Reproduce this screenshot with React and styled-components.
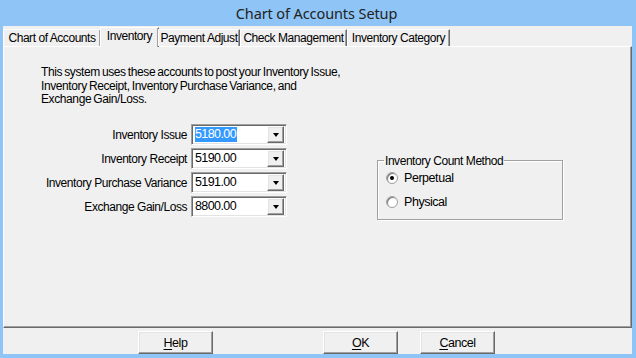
import React from "react";
import styled, { createGlobalStyle, css } from "styled-components";

const Global = createGlobalStyle`
  html, body { margin: 0; padding: 0; background: #8ec5f6; }
  body { width: 636px; height: 358px; overflow: hidden; }
  #root { width: 636px; height: 358px; }
`;

const sunken = css`
  border-top: 1px solid #a0a0a0;
  border-left: 1px solid #a0a0a0;
  border-right: 1px solid #ffffff;
  border-bottom: 1px solid #ffffff;
  box-shadow: inset 1px 1px 0 #696969, inset -1px -1px 0 #e3e3e3;
`;

const raised = css`
  border-top: 1px solid #ffffff;
  border-left: 1px solid #ffffff;
  border-right: 1px solid #696969;
  border-bottom: 1px solid #696969;
  box-shadow: inset -1px -1px 0 #a0a0a0, inset 1px 1px 0 #e3e3e3;
`;

const Window = styled.div`
  width: 636px;
  height: 358px;
  box-sizing: border-box;
  background: #8ec5f6;
  padding: 0 4px 4px 3px;
  display: flex;
  flex-direction: column;
  font-family: "Liberation Sans", Arial, sans-serif;
  font-size: 12px;
  letter-spacing: -0.45px;
  color: #000;
`;

const TitleBar = styled.div`
  height: 26px;
  flex: none;
  display: flex;
  align-items: center;
  justify-content: center;
  font-family: "Noto Sans", "Open Sans", sans-serif;
  font-size: 14.5px;
  letter-spacing: -0.1px;
  color: #222;
  padding-right: 2px;
`;

const Client = styled.div`
  flex: 1;
  background: #f0f0f0;
  display: flex;
  flex-direction: column;
  min-height: 0;
`;

const TabStrip = styled.div`
  height: 20px;
  flex: none;
  display: flex;
  align-items: flex-end;
  position: relative;
  z-index: 1;
`;

const Tab = styled.div`
  box-sizing: border-box;
  width: ${(p) => p.$w}px;
  height: ${(p) => (p.$active ? 20 : 17)}px;
  display: flex;
  align-items: center;
  justify-content: center;
  padding-bottom: ${(p) => (p.$active ? 3 : 0)}px;
  background: #f0f0f0;
  border-top: 1px solid #ffffff;
  border-left: 1px solid #ffffff;
  border-right: 1px solid #696969;
  box-shadow: inset -1px 0 0 #a0a0a0;
  white-space: nowrap;
  margin-left: ${(p) => (p.$active ? -1 : 0)}px;
  margin-right: ${(p) => (p.$active ? -1 : 0)}px;
  margin-bottom: ${(p) => (p.$active ? -1 : 0)}px;
`;

const Panel = styled.div`
  flex: 1;
  min-height: 0;
  border-top: 1px solid #ffffff;
  border-left: 1px solid #ffffff;
  border-right: 1px solid #696969;
  border-bottom: 1px solid #696969;
  box-shadow: inset -1px -1px 0 #a0a0a0;
  padding: 19px 0 0 37px;
  display: flex;
  flex-direction: column;
`;

const Intro = styled.p`
  margin: 0;
  line-height: 13.5px;
  letter-spacing: -0.4px;
  word-spacing: -0.8px;
  white-space: nowrap;
`;

const FormArea = styled.div`
  display: flex;
  align-items: flex-start;
  margin-top: 17px;
`;

const Fields = styled.div`
  display: grid;
  grid-template-columns: 146px 96px;
  column-gap: 4px;
  row-gap: 3px;
  align-items: center;
`;

const Label = styled.label`
  text-align: right;
  white-space: nowrap;
  padding-top: 1px;
`;

const Combo = styled.div`
  box-sizing: border-box;
  height: 21px;
  ${sunken};
  background: #ffffff;
  display: flex;
  align-items: center;
  padding: 1px 2px 1px 2px;
`;

const Value = styled.span`
  flex: 1;
  display: flex;
  align-items: center;
  height: 100%;
  font-size: 12.5px;
  letter-spacing: -0.6px;
  padding-left: 1px;
`;

const Highlight = styled.span`
  background: ${(p) => (p.$sel ? "#3399ff" : "transparent")};
  color: ${(p) => (p.$sel ? "#ffffff" : "#000")};
  line-height: 15px;
  padding-right: 1px;
`;

const DropButton = styled.span`
  box-sizing: border-box;
  width: 17px;
  height: 17px;
  background: #f0f0f0;
  ${raised};
  display: flex;
  align-items: center;
  justify-content: center;
`;

const Arrow = styled.span`
  width: 0;
  height: 0;
  border-left: 3.5px solid transparent;
  border-right: 3.5px solid transparent;
  border-top: 4px solid #000;
  margin-top: 1px;
`;

const Group = styled.fieldset`
  margin: 30px 0 0 90px;
  padding: 2px 0 0 8px;
  width: 186px;
  height: 66px;
  box-sizing: border-box;
  border: 1px solid #a0a0a0;
  box-shadow: 1px 1px 0 #ffffff, inset 1px 1px 0 #ffffff;
`;

const Legend = styled.legend`
  padding: 0 1px;
  margin-left: -2px;
`;

const RadioRow = styled.div`
  display: flex;
  align-items: center;
  gap: 6px;
  height: 16px;
  margin-bottom: ${(p) => p.$mb || 0}px;
`;

const RadioCircle = styled.span`
  box-sizing: border-box;
  width: 12px;
  height: 12px;
  border-radius: 50%;
  border: 1px solid #a0a0a0;
  background: radial-gradient(circle at 60% 60%, #ffffff 40%, #e8e8e8 100%);
  box-shadow: inset 1px 1px 0 #7a7a7a;
  display: flex;
  align-items: center;
  justify-content: center;
  &::after {
    content: "";
    width: 4px;
    height: 4px;
    border-radius: 50%;
    background: ${(p) => (p.$checked ? "#000" : "transparent")};
  }
`;

const RadioText = styled.span`
  font-size: 12.5px;
`;

const ButtonBar = styled.div`
  height: 26px;
  flex: none;
  display: flex;
  align-items: flex-end;
  padding-left: 135px;
`;

const Button = styled.div`
  box-sizing: border-box;
  width: 75px;
  height: 23px;
  background: #f0f0f0;
  ${raised};
  display: flex;
  align-items: center;
  justify-content: center;
  font-size: 12.5px;
  margin-left: ${(p) => p.$ml || 0}px;
`;

const U = styled.span`
  text-decoration: underline;
  text-underline-offset: 2px;
`;

const tabs = [
  { t: "Chart of Accounts", w: 98 },
  { t: "Inventory", w: 59, active: true },
  { t: "Payment Adjust", w: 82 },
  { t: "Check Management", w: 107 },
  { t: "Inventory Category", w: 103 },
];

const fields = [
  { label: "Inventory Issue", value: "5180.00", sel: true },
  { label: "Inventory Receipt", value: "5190.00" },
  { label: "Inventory Purchase Variance", value: "5191.00" },
  { label: "Exchange Gain/Loss", value: "8800.00" },
];

export default function App() {
  return (
    <>
      <Global />
      <Window>
        <TitleBar>Chart of Accounts Setup</TitleBar>
        <Client>
          <TabStrip>
            {tabs.map((tb) => (
              <Tab key={tb.t} $w={tb.w} $active={tb.active}>
                {tb.t}
              </Tab>
            ))}
          </TabStrip>
          <Panel>
            <Intro>
              This system uses these accounts to post your Inventory Issue,
              <br />
              Inventory Receipt, Inventory Purchase Variance, and
              <br />
              Exchange Gain/Loss.
            </Intro>
            <FormArea>
              <Fields>
                {fields.map((f) => (
                  <React.Fragment key={f.label}>
                    <Label>{f.label}</Label>
                    <Combo>
                      <Value>
                        <Highlight $sel={f.sel}>{f.value}</Highlight>
                      </Value>
                      <DropButton>
                        <Arrow />
                      </DropButton>
                    </Combo>
                  </React.Fragment>
                ))}
              </Fields>
              <Group>
                <Legend>Inventory Count Method</Legend>
                <RadioRow $mb={8}>
                  <RadioCircle $checked />
                  <RadioText>Perpetual</RadioText>
                </RadioRow>
                <RadioRow>
                  <RadioCircle />
                  <RadioText>Physical</RadioText>
                </RadioRow>
              </Group>
            </FormArea>
          </Panel>
          <ButtonBar>
            <Button>
              <U>H</U>elp
            </Button>
            <Button $ml={110}>
              <U>O</U>K
            </Button>
            <Button $ml={22}>
              <U>C</U>ancel
            </Button>
          </ButtonBar>
        </Client>
      </Window>
    </>
  );
}
